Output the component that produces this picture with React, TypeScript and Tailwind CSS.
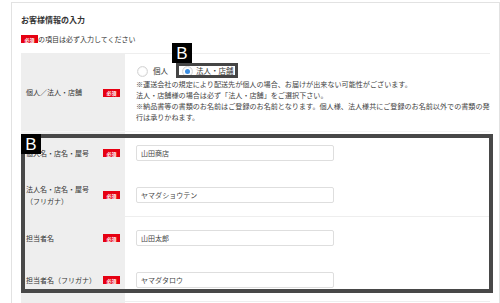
import React from 'react';

const font = { fontFamily: '"Noto Sans CJK JP", "Noto Sans", sans-serif' };

function Req() {
    return (
        <span className="inline-flex items-center justify-center w-[17px] h-[8px] bg-[#e60012] text-white text-[5px] font-bold leading-none">必須</span>
    );
}

function Radio({ checked, label, gap }: { checked?: boolean; label: string; gap: string }) {
    return (
        <label className={"flex items-center " + gap}>
            <span className="w-[11px] h-[11px] rounded-full border border-[#d6d6d6] bg-white flex items-center justify-center shadow-[inset_0_0_1px_#ccc]">
                {checked && <span className="w-[5px] h-[5px] rounded-full bg-[#3b8de0]" />}
            </span>
            <span>{label}</span>
        </label>
    );
}

function InputRow({ label, value }: { label: React.ReactNode; value: string }) {
    return (
        <div className="flex h-[42px]">
            <div className="w-[104px] bg-[#eeeeee] flex items-center justify-between px-[5px]">
                <div className="leading-[12px]">{label}</div>
                <Req />
            </div>
            <div className="flex-1 flex items-center pl-[11px]">
                <div className="w-[198px] h-[16px] border border-[#dedede] rounded-[2px] flex items-center px-[4px] text-[#444]">{value}</div>
            </div>
        </div>
    );
}

export default function App() {
    return (
        <div className="relative w-[500px] h-[303px] overflow-hidden bg-white text-[#333] text-[7px]" style={font}>
            <div className="pt-[2px] pl-[11px]">
                <div className="border border-[#e2e2e2] pt-[11px] px-[9px] h-[320px]">
                    <h2 className="text-[8px] font-bold leading-[12px]">お客様情報の入力</h2>
                    <div className="mt-[8px] flex items-center leading-[10px]">
                        <Req />
                        <span>の項目は必ず入力してください</span>
                    </div>
                    <div className="mt-[9px] border-t border-[#eeeeee]">
                        <div className="flex border-b border-[#f5f5f5]">
                            <div className="w-[104px] bg-[#eeeeee] flex items-center justify-between px-[5px]">
                                <span>個人／法人・店舗</span>
                                <Req />
                            </div>
                            <div className="flex-1 pl-[11px] pt-[10px] pb-[8px]">
                                <div className="flex items-center gap-[14px] h-[14px] pl-[1px] text-[7.5px]">
                                    <Radio label="個人" gap="gap-[5px]" />
                                    <Radio checked label="法人・店舗" gap="gap-[3px]" />
                                </div>
                                <div className="leading-[11px] mt-[1px] text-[#444] text-[7.1px]">
                                    <p>※運送会社の規定により配送先が個人の場合、お届けが出来ない可能性がございます。</p>
                                    <p>法人・店舗様の場合は必ず「法人・店舗」をご選択下さい。</p>
                                    <p>※納品書等の書類のお名前はご登録のお名前となります。個人様、法人様共にご登録のお名前以外での書類の発</p>
                                    <p>行は承りかねます。</p>
                                </div>
                            </div>
                        </div>
                        <div className="border-b border-[#eeeeee]">
                            <InputRow label="個人名・店名・屋号" value="山田商店" />
                            <InputRow label={<>法人名・店名・屋号<br />（フリガナ）</>} value="ヤマダショウテン" />
                        </div>
                        <div className="border-b border-[#eeeeee]">
                            <InputRow label="担当者名" value="山田太郎" />
                            <InputRow label="担当者名（フリガナ）" value="ヤマダタロウ" />
                        </div>
                        <div className="flex h-[40px]">
                            <div className="w-[104px] bg-[#eeeeee]" />
                            <div className="flex-1" />
                        </div>
                    </div>
                </div>
            </div>

            <div className="absolute left-[176px] top-[63px] w-[62px] h-[15px] border-[3px] border-[#454545]" />
            <div className="absolute left-[172px] top-[43px] w-[20px] h-[20px] bg-black text-white flex items-center justify-center text-[17px] leading-none" style={{ fontFamily: '"Liberation Sans", Arial, sans-serif' }}>B</div>

            <div className="absolute left-[21px] top-[134px] w-[472px] h-[159px] border-4 border-[#484848]" />
            <div className="absolute left-[21px] top-[134px] w-[20px] h-[20px] bg-black text-white flex items-center justify-center text-[17px] leading-none" style={{ fontFamily: '"Liberation Sans", Arial, sans-serif' }}>B</div>
        </div>
    );
}
